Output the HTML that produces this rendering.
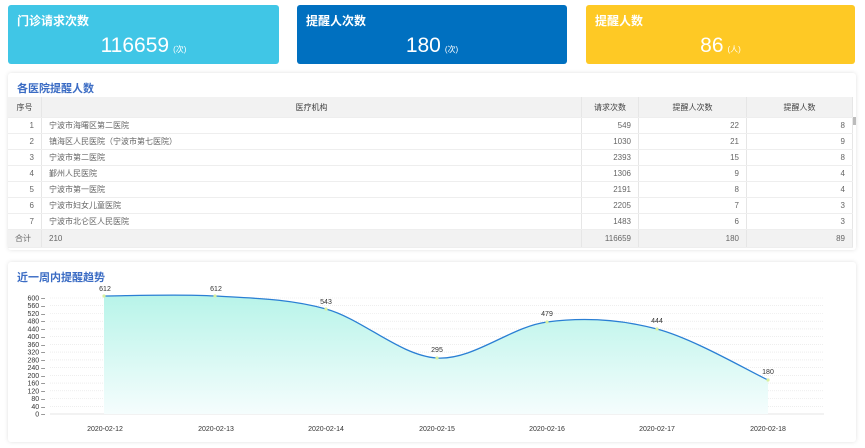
<!DOCTYPE html>
<html><head><meta charset="utf-8"><style>
body{margin:0;width:865px;height:448px;background:#fff;font-family:"Liberation Sans","Noto Sans CJK SC",sans-serif;position:relative;overflow:hidden}
.card{position:absolute;top:5px;height:59px;border-radius:3px;color:#fff}
.card .t{position:absolute;left:9px;top:7px;font-size:12px;font-weight:bold}
.card .v{position:absolute;left:0;right:0;top:29px;text-align:center;font-size:21px}
.card .v small{font-size:8px;margin-left:4px}
.panel{position:absolute;left:8px;width:848px;background:#fff;box-shadow:0 0 4px rgba(0,0,0,.12);border-radius:3px}
.ptitle{position:absolute;left:9px;font-size:11px;font-weight:bold;color:#3b6cc4}
table{position:absolute;left:0;top:24px;width:845px;border-collapse:collapse;font-size:8px;color:#666}
td,th{height:15px;padding:0 7px;border-bottom:1px solid #eee;border-right:1px solid #e6e6e6;font-weight:normal}
th{background:#f2f2f2;height:20px;color:#444}
tr.tot td{background:#f2f2f2;height:17px}
.r{text-align:right}.c{text-align:center}
</style></head><body>
<div class="card" style="left:8px;width:271px;background:#40c6e6"><div class="t">门诊请求次数</div><div class="v">116659<small>(次)</small></div></div>
<div class="card" style="left:297px;width:270px;background:#0070c0"><div class="t">提醒人次数</div><div class="v">180<small>(次)</small></div></div>
<div class="card" style="left:586px;width:269px;background:#fec925"><div class="t">提醒人数</div><div class="v">86<small>(人)</small></div></div>

<div class="panel" style="top:73px;height:177px">
<div class="ptitle" style="top:7px">各医院提醒人数</div>
<table>
<tr><th style="width:19px">序号</th><th class="c" style="width:525px">医疗机构</th><th class="c" style="width:42px">请求次数</th><th class="c" style="width:93px">提醒人次数</th><th class="c">提醒人数</th></tr>
<tr><td class="r">1</td><td>宁波市海曙区第二医院</td><td class="r">549</td><td class="r">22</td><td class="r">8</td></tr>
<tr><td class="r">2</td><td>镇海区人民医院（宁波市第七医院）</td><td class="r">1030</td><td class="r">21</td><td class="r">9</td></tr>
<tr><td class="r">3</td><td>宁波市第二医院</td><td class="r">2393</td><td class="r">15</td><td class="r">8</td></tr>
<tr><td class="r">4</td><td>鄞州人民医院</td><td class="r">1306</td><td class="r">9</td><td class="r">4</td></tr>
<tr><td class="r">5</td><td>宁波市第一医院</td><td class="r">2191</td><td class="r">8</td><td class="r">4</td></tr>
<tr><td class="r">6</td><td>宁波市妇女儿童医院</td><td class="r">2205</td><td class="r">7</td><td class="r">3</td></tr>
<tr><td class="r">7</td><td>宁波市北仑区人民医院</td><td class="r">1483</td><td class="r">6</td><td class="r">3</td></tr>
<tr class="tot"><td>合计</td><td>210</td><td class="r">116659</td><td class="r">180</td><td class="r">89</td></tr>
</table>
<div style="position:absolute;left:845px;top:44px;width:3px;height:8px;background:#bbb"></div>
</div>

<div class="panel" style="top:262px;height:180px">
<div class="ptitle" style="top:7px">近一周内提醒趋势</div>
</div>
<svg style="position:absolute;left:0;top:0" width="865" height="448" font-family="Liberation Sans, sans-serif" font-size="7" fill="#333">
<defs><linearGradient id="g" x1="0" x2="0" y1="296" y2="414" gradientUnits="userSpaceOnUse"><stop offset="0" stop-color="#b8f4e9"/><stop offset="1" stop-color="#f5fdfd"/></linearGradient></defs>
<g stroke="#e3e3e3" stroke-dasharray="1,1" stroke-width="0.6">
<line x1="50" x2="824" y1="298" y2="298"/><line x1="50" x2="824" y1="305.7" y2="305.7"/><line x1="50" x2="824" y1="313.5" y2="313.5"/><line x1="50" x2="824" y1="321.2" y2="321.2"/><line x1="50" x2="824" y1="328.9" y2="328.9"/><line x1="50" x2="824" y1="336.7" y2="336.7"/><line x1="50" x2="824" y1="344.4" y2="344.4"/><line x1="50" x2="824" y1="352.1" y2="352.1"/><line x1="50" x2="824" y1="359.9" y2="359.9"/><line x1="50" x2="824" y1="367.6" y2="367.6"/><line x1="50" x2="824" y1="375.3" y2="375.3"/><line x1="50" x2="824" y1="383.1" y2="383.1"/><line x1="50" x2="824" y1="390.8" y2="390.8"/><line x1="50" x2="824" y1="398.5" y2="398.5"/><line x1="50" x2="824" y1="406.3" y2="406.3"/>
</g>
<line x1="50" x2="824" y1="414" y2="414" stroke="#ddd" stroke-width="0.8"/>
<path d="M104,296 C122.5,296 178,293.8 215,296 C252,298.2 289,298.7 326,309 C363,319.3 400.2,355.8 437,358 C473.8,360.2 510.3,326.8 547,322 C583.7,317.2 620.2,319.3 657,329 C693.8,338.7 749.5,371.5 768,380 L768,414 L104,414 Z" fill="url(#g)"/>
<path d="M104,296 C122.5,296 178,293.8 215,296 C252,298.2 289,298.7 326,309 C363,319.3 400.2,355.8 437,358 C473.8,360.2 510.3,326.8 547,322 C583.7,317.2 620.2,319.3 657,329 C693.8,338.7 749.5,371.5 768,380" fill="none" stroke="#2a7fd4" stroke-width="1.3"/>
<g fill="#d8f0a0"><circle cx="104" cy="296" r="1.6"/><circle cx="215" cy="296" r="1.6"/><circle cx="326" cy="309" r="1.6"/><circle cx="437" cy="358" r="1.6"/><circle cx="547" cy="322" r="1.6"/><circle cx="657" cy="329" r="1.6"/><circle cx="768" cy="380" r="1.6"/></g>
<g text-anchor="middle"><text x="105" y="291">612</text><text x="216" y="291">612</text><text x="326" y="304">543</text><text x="437" y="352">295</text><text x="547" y="316">479</text><text x="657" y="323">444</text><text x="768" y="374">180</text>
<text x="105" y="431">2020-02-12</text><text x="216" y="431">2020-02-13</text><text x="326" y="431">2020-02-14</text><text x="437" y="431">2020-02-15</text><text x="547" y="431">2020-02-16</text><text x="657" y="431">2020-02-17</text><text x="768" y="431">2020-02-18</text></g>
<g text-anchor="end"><text x="45" y="300.5">600 –</text><text x="45" y="308.2">560 –</text><text x="45" y="316">520 –</text><text x="45" y="323.7">480 –</text><text x="45" y="331.4">440 –</text><text x="45" y="339.2">400 –</text><text x="45" y="346.9">360 –</text><text x="45" y="354.6">320 –</text><text x="45" y="362.4">280 –</text><text x="45" y="370.1">240 –</text><text x="45" y="377.8">200 –</text><text x="45" y="385.6">160 –</text><text x="45" y="393.3">120 –</text><text x="45" y="401">80 –</text><text x="45" y="408.8">40 –</text><text x="45" y="416.5">0 –</text></g>
</svg>
</body></html>
